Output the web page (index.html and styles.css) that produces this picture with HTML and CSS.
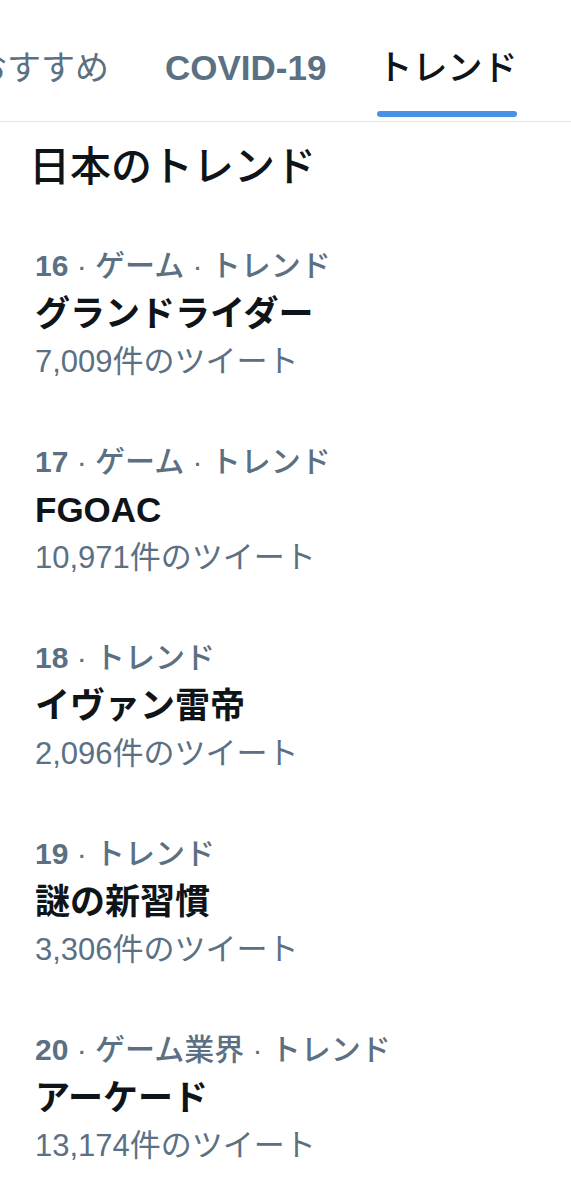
FILE: index.html
```html
<!DOCTYPE html>
<html lang="ja">
<head>
  <meta charset="UTF-8" />
  <title>トレンド</title>
  <link rel="stylesheet" href="styles.css">
</head>
<body>

  <!-- タブ -->
  <nav class="tabs">
    <div class="tab">おすすめ</div>
    <div class="tab tab-bold">COVID-19</div>
    <div class="tab active"><span class="tab-label">トレンド</span></div>
  </nav>

  <h1 class="heading">日本のトレンド</h1>

  <!-- トレンド一覧 -->
  <ul class="trends">
    <li class="trend">
      <div class="meta"><b>16</b> · ゲーム · トレンド</div>
      <div class="name">グランドライダー</div>
      <div class="count">7,009件のツイート</div>
    </li>
    <li class="trend">
      <div class="meta"><b>17</b> · ゲーム · トレンド</div>
      <div class="name">FGOAC</div>
      <div class="count">10,971件のツイート</div>
    </li>
    <li class="trend">
      <div class="meta"><b>18</b> · トレンド</div>
      <div class="name">イヴァン雷帝</div>
      <div class="count">2,096件のツイート</div>
    </li>
    <li class="trend">
      <div class="meta"><b>19</b> · トレンド</div>
      <div class="name">謎の新習慣</div>
      <div class="count">3,306件のツイート</div>
    </li>
    <li class="trend">
      <div class="meta"><b>20</b> · ゲーム業界 · トレンド</div>
      <div class="name">アーケード</div>
      <div class="count">13,174件のツイート</div>
    </li>
  </ul>

</body>
</html>
```

FILE: styles.css
```css
body {
  margin: 0;
  background: #fff;
  color: #0f1419;
  font-family: "Liberation Sans", "Noto Sans CJK JP", sans-serif;
  overflow: hidden;
}

.tabs {
  display: flex;
  height: 121px;
  border-bottom: 1px solid #e3e6e8;
  margin-left: -55px;
}

.tab {
  padding: 46px 28px 0;
  font-size: 34px;
  line-height: 44px;
  color: #5b7083;
  white-space: nowrap;
}

.tab-bold {
  font-weight: 700;
  font-size: 35px;
}

.tab.active {
  padding-left: 23px;
  color: #0f1419;
  font-weight: 500;
}

/* barre bleue sous l'onglet actif */
.tab-label {
  display: block;
  font-size: 35px;
}

.tab-label::after {
  content: "";
  display: block;
  height: 6px;
  margin-top: 21px;
  border-radius: 3px;
  background: #4a93e4;
}

.heading {
  margin: 15px 0 0;
  padding-left: 29px;
  font-size: 41px;
  line-height: 60px;
  font-weight: 500;
}

.trends {
  list-style: none;
  margin: 0;
  padding: 46px 0 0 35px;
}

.trend {
  padding-bottom: 54px;
}

.meta {
  font-size: 30px;
  line-height: 46px;
  font-weight: 500;
  color: #5b7083;
}

.meta b {
  font-weight: 700;
}

.name {
  font-size: 35px;
  line-height: 50px;
  font-weight: 700;
  color: #0f1419;
}

.count {
  font-size: 31px;
  line-height: 46px;
  color: #5b7083;
}
```
